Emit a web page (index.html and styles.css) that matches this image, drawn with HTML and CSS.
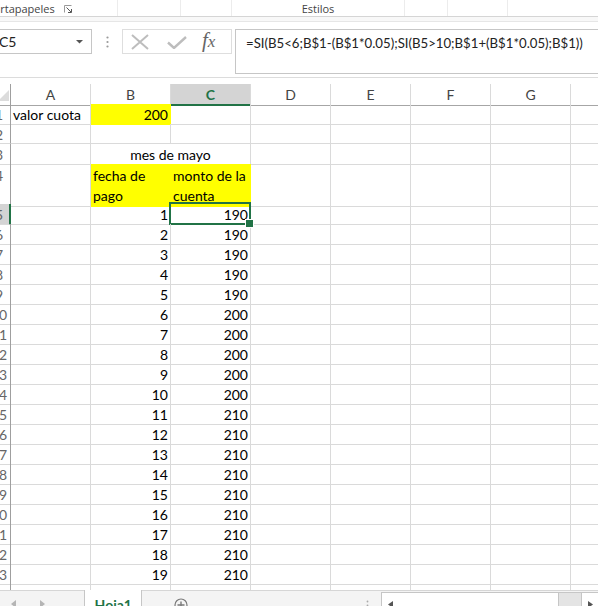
FILE: index.html
```html
<!DOCTYPE html>
<html lang="es">
<head>
<meta charset="utf-8">
<title>Hoja1</title>
<link rel="stylesheet" href="styles.css">
</head>
<body>
<div class="ribbon">
  <div class="rg rg1"><span class="rlabel">Portapapeles</span><svg class="launcher" width="8" height="8" viewBox="0 0 8 8"><path d="M0.5 7.5V0.5H7.5" fill="none" stroke="#9a9a9a"/><path d="M2.5 2.5L7 7M4 7.5H7.5V4" fill="none" stroke="#555"/></svg></div>
  <div class="rg rg2"></div>
  <div class="rg rg3"></div>
  <div class="rg rg4"><span class="rlabel">Estilos</span></div>
  <div class="rg rg5"></div>
  <div class="rg rg6"></div>
  <div class="rg rg7"></div>
</div>
<div class="band"></div>
<div class="fbar">
  <div class="namebox"><span>C5</span><svg width="7" height="4" viewBox="0 0 7 4"><polygon points="0,0 7,0 3.5,3.5" fill="#555"/></svg></div>
  <div class="grip"><svg width="3" height="12" viewBox="0 0 3 12"><circle cx="1.5" cy="1.5" r="1.1" fill="#9a9a9a"/><circle cx="1.5" cy="6" r="1.1" fill="#9a9a9a"/><circle cx="1.5" cy="10.5" r="1.1" fill="#9a9a9a"/></svg></div>
  <div class="fbtns">
    <svg class="ic-x" width="18" height="16" viewBox="0 0 18 16"><path d="M1 1L17 15M17 1L1 15" stroke="#bdbdbd" stroke-width="2" fill="none"/></svg>
    <svg class="ic-ok" width="20" height="13" viewBox="0 0 20 13"><path d="M1 6.5L7 12L19 1" stroke="#bdbdbd" stroke-width="2.4" fill="none"/></svg>
    <span class="fx">f<span class="fxx">x</span></span>
  </div>
  <div class="formula">=SI(B5&lt;6;B$1-(B$1*0.05);SI(B5&gt;10;B$1+(B$1*0.05);B$1))</div>
</div>
<div class="sheet">
  <div class="r hd"><div class="corner"><svg width="10" height="19" viewBox="0 0 10 19"><polygon points="9,6 9,17 -2,17" fill="#dcdcdc"/></svg></div><div>A</div><div>B</div><div class="on">C</div><div>D</div><div>E</div><div>F</div><div>G</div><div></div></div>
  <div class="r"><div class="h"><span>1</span></div><div>valor cuota</div><div class="n y">200</div><div></div><div></div><div></div><div></div><div></div><div></div></div>
  <div class="r"><div class="h"><span>2</span></div><div></div><div></div><div></div><div></div><div></div><div></div><div></div><div></div></div>
  <div class="r"><div class="h"><span>3</span></div><div></div><div class="m">mes de mayo</div><div></div><div></div><div></div><div></div><div></div></div>
  <div class="r r4"><div class="h"><span>4</span></div><div></div><div class="y">fecha de pago</div><div class="y">monto de la cuenta</div><div></div><div></div><div></div><div></div><div></div></div>
  <div class="r"><div class="h on"><span>5</span></div><div></div><div class="n">1</div><div class="n sel">190</div><div></div><div></div><div></div><div></div><div></div></div>
  <div class="r"><div class="h"><span>6</span></div><div></div><div class="n">2</div><div class="n">190</div><div></div><div></div><div></div><div></div><div></div></div>
  <div class="r"><div class="h"><span>7</span></div><div></div><div class="n">3</div><div class="n">190</div><div></div><div></div><div></div><div></div><div></div></div>
  <div class="r"><div class="h"><span>8</span></div><div></div><div class="n">4</div><div class="n">190</div><div></div><div></div><div></div><div></div><div></div></div>
  <div class="r"><div class="h"><span>9</span></div><div></div><div class="n">5</div><div class="n">190</div><div></div><div></div><div></div><div></div><div></div></div>
  <div class="r"><div class="h"><span>10</span></div><div></div><div class="n">6</div><div class="n">200</div><div></div><div></div><div></div><div></div><div></div></div>
  <div class="r"><div class="h"><span>11</span></div><div></div><div class="n">7</div><div class="n">200</div><div></div><div></div><div></div><div></div><div></div></div>
  <div class="r"><div class="h"><span>12</span></div><div></div><div class="n">8</div><div class="n">200</div><div></div><div></div><div></div><div></div><div></div></div>
  <div class="r"><div class="h"><span>13</span></div><div></div><div class="n">9</div><div class="n">200</div><div></div><div></div><div></div><div></div><div></div></div>
  <div class="r"><div class="h"><span>14</span></div><div></div><div class="n">10</div><div class="n">200</div><div></div><div></div><div></div><div></div><div></div></div>
  <div class="r"><div class="h"><span>15</span></div><div></div><div class="n">11</div><div class="n">210</div><div></div><div></div><div></div><div></div><div></div></div>
  <div class="r"><div class="h"><span>16</span></div><div></div><div class="n">12</div><div class="n">210</div><div></div><div></div><div></div><div></div><div></div></div>
  <div class="r"><div class="h"><span>17</span></div><div></div><div class="n">13</div><div class="n">210</div><div></div><div></div><div></div><div></div><div></div></div>
  <div class="r"><div class="h"><span>18</span></div><div></div><div class="n">14</div><div class="n">210</div><div></div><div></div><div></div><div></div><div></div></div>
  <div class="r"><div class="h"><span>19</span></div><div></div><div class="n">15</div><div class="n">210</div><div></div><div></div><div></div><div></div><div></div></div>
  <div class="r"><div class="h"><span>20</span></div><div></div><div class="n">16</div><div class="n">210</div><div></div><div></div><div></div><div></div><div></div></div>
  <div class="r"><div class="h"><span>21</span></div><div></div><div class="n">17</div><div class="n">210</div><div></div><div></div><div></div><div></div><div></div></div>
  <div class="r"><div class="h"><span>22</span></div><div></div><div class="n">18</div><div class="n">210</div><div></div><div></div><div></div><div></div><div></div></div>
  <div class="r"><div class="h"><span>23</span></div><div></div><div class="n">19</div><div class="n">210</div><div></div><div></div><div></div><div></div><div></div></div>
  <div class="r"><div class="h"><span>24</span></div><div></div><div></div><div></div><div></div><div></div><div></div><div></div><div></div></div>
</div>
<div class="tabbar">
  <div class="nav">
    <svg width="5" height="8" viewBox="0 0 5 8"><polygon points="5,0 5,8 0,4" fill="#b5b5b5"/></svg>
    <svg width="5" height="8" viewBox="0 0 5 8"><polygon points="0,0 0,8 5,4" fill="#b5b5b5"/></svg>
  </div>
  <div class="tab">Hoja1</div>
  <div class="addarea"><svg width="14" height="14" viewBox="0 0 14 14"><circle cx="7" cy="7" r="6" fill="none" stroke="#7a7a7a" stroke-width="1.2"/><path d="M7 3.5V10.5M3.5 7H10.5" stroke="#7a7a7a" stroke-width="1.4"/></svg></div>
  <div class="split"><svg width="3" height="8" viewBox="0 0 3 8"><circle cx="1.5" cy="1.5" r="0.9" fill="#aaa"/><circle cx="1.5" cy="5.5" r="0.9" fill="#aaa"/></svg></div>
  <div class="hscroll">
    <div class="sbtn"><svg width="5" height="7" viewBox="0 0 5 7"><polygon points="5,0 5,7 0,3.5" fill="#555"/></svg></div>
    <div class="strack"></div>
    <div class="sthumb"></div>
    <div class="sbtn"><svg width="5" height="7" viewBox="0 0 5 7"><polygon points="0,0 0,7 5,3.5" fill="#555"/></svg></div>
  </div>
</div>
</body>
</html>
```
FILE: styles.css
```css
* { box-sizing: border-box; }
html, body { margin: 0; padding: 0; }
body {
  width: 598px;
  height: 606px;
  overflow: hidden;
  background: #fff;
  font-family: Lato, "Liberation Sans", sans-serif;
  font-size: 14px;
  color: #000;
}

/* ribbon bottom strip */
.ribbon {
  height: 17px;
  display: flex;
  border-bottom: 1px solid #d5d5d5;
  font-family: "Open Sans", "DejaVu Sans", sans-serif;
  font-size: 11px;
  color: #444;
  overflow: hidden;
}
.rg {
  height: 100%;
  flex-shrink: 0;
  display: flex;
  align-items: center;
  padding-top: 1px;
  border-right: 1px solid #ececec;
}
.rg1 { width: 131px; margin-left: -13px; }
.rg2 { width: 63px; }
.rg3 { width: 51px; }
.rg4 { width: 173px; justify-content: center; }
.rg5 { width: 43px; }
.rg6 { width: 60px; }
.rg7 { flex: 1; border-right: 0; }
.rlabel { white-space: nowrap; line-height: 14px; }
.launcher { margin-left: 9px; margin-top: 1px; }

.band {
  height: 5px;
  background: #f8f8f8;
  border-bottom: 1px solid #e6e6e6;
}

/* formula bar */
.fbar {
  height: 56px;
  display: flex;
  align-items: flex-start;
  padding: 7px 0 3px;
  border-bottom: 1px solid #dcdcdc;
}
.namebox {
  flex-shrink: 0;
  width: 102px;
  height: 25px;
  margin-left: -10px;
  border: 1px solid #c6c6c6;
  display: flex;
  align-items: center;
  justify-content: space-between;
  padding: 0 8px 0 8px;
  font-size: 14px;
  color: #222;
}
.grip {
  flex-shrink: 0;
  width: 30px;
  height: 25px;
  display: flex;
  align-items: center;
  justify-content: center;
}
.fbtns {
  flex-shrink: 0;
  width: 110px;
  height: 25px;
  border: 1px solid #dedede;
  display: flex;
  align-items: center;
  padding-left: 8px;
}
.ic-x { margin-right: 18px; }
.ic-ok { margin-right: 15px; margin-top: 2px; }
.fx {
  font-family: "Liberation Serif", "DejaVu Serif", serif;
  font-style: italic;
  font-size: 21px;
  line-height: 21px;
  color: #666;
  margin-top: -2px;
}
.fxx { font-size: 17px; }
.formula {
  flex: 1;
  height: 45px;
  margin-left: 3px;
  margin-right: -4px;
  border: 1px solid #c6c6c6;
  padding: 5px 0 0 10px;
  font-size: 13.2px;
  line-height: 16px;
  color: #222;
  white-space: nowrap;
  overflow: hidden;
}

/* sheet */
.sheet {
  margin-top: 6px;
  height: 506px;
  overflow: hidden;
}
.r {
  display: grid;
  grid-template-columns: 11px repeat(8, 80px);
  height: 20px;
}
.r > div {
  position: relative;
  border-right: 1px solid #dadada;
  border-bottom: 1px solid #dadada;
  padding: 2px 2px 0 2px;
  line-height: 18px;
  font-size: 14px;
  white-space: nowrap;
}
.r4 { height: 40px; }
.r4 > div { line-height: 20px; white-space: normal; }

.r > .h {
  padding: 2px 0 0 0;
  display: flex;
  justify-content: flex-end;
  overflow: hidden;
  border-right-color: #9f9f9f;
  color: #666;
}
.h span { flex: 0 0 22px; text-align: center; }
.r > .h.on {
  background: #d4d4d4;
  border-right: 2px solid #217346;
}
.r > .h.on span { flex-basis: 20px; }

.hd > div {
  text-align: center;
  color: #444;
  border-bottom-color: #a6a6a6;
}
.hd > .corner {
  padding: 0;
  border-right-color: #9f9f9f;
}
.corner svg { display: block; }
.hd > .on {
  background: #d4d4d4;
  color: #217346;
  font-weight: bold;
  border-bottom: 2px solid #217346;
}

.r > .n { text-align: right; }
.r > .m { grid-column: span 2; text-align: center; }
.r > .y { background: #ffff00; border-color: #ffff00; }

.sel::after {
  content: "";
  position: absolute;
  left: -2px;
  top: -2px;
  right: -1px;
  bottom: -1px;
  border: 2px solid #217346;
}
.sel::before {
  content: "";
  position: absolute;
  right: -4px;
  bottom: -4px;
  width: 7px;
  height: 7px;
  background: #217346;
  border: 1px solid #fff;
  z-index: 2;
}

/* sheet tabs */
.tabbar {
  height: 16px;
  display: flex;
  overflow: hidden;
}
.nav {
  width: 85px;
  background: #f4f4f4;
  border-top: 1px solid #d6d6d6;
  display: flex;
  align-items: flex-start;
  padding: 9px 0 0 11px;
  gap: 24px;
}
.tab {
  width: 59px;
  background: #fff;
  border-left: 1px solid #c6c6c6;
  border-right: 1px solid #c6c6c6;
  text-align: center;
  padding-top: 7px;
  line-height: 16px;
  font-weight: bold;
  font-size: 14px;
  color: #217346;
}
.addarea {
  width: 221px;
  background: #f4f4f4;
  border-top: 1px solid #d6d6d6;
  padding: 7px 0 0 32px;
}
.addarea svg { display: block; }
.split {
  width: 20px;
  background: #f4f4f4;
  border-top: 1px solid #d6d6d6;
  padding: 9px 0 0 5px;
}
.split svg { display: block; }
.hscroll {
  flex: 1;
  display: flex;
  background: #f4f4f4;
  border-top: 1px solid #d6d6d6;
  padding-top: 1px;
}
.sbtn {
  width: 17px;
  border-top: 1px solid #c6c6c6;
  border-left: 1px solid #c6c6c6;
  display: flex;
  justify-content: center;
  padding-top: 8px;
  background: #fff;
}
.strack {
  width: 160px;
  background: #fff;
  border-top: 1px solid #c6c6c6;
}
.sthumb {
  width: 23px;
  background: #e4e4e4;
  border-top: 1px solid #c6c6c6;
  border-left: 1px solid #c6c6c6;
}
```
